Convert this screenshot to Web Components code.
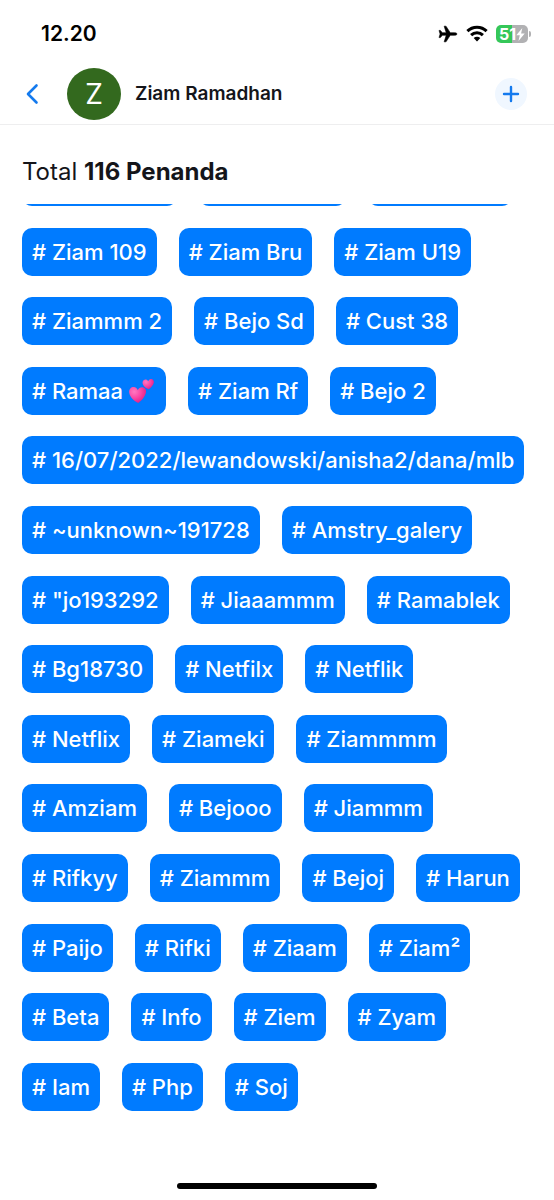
<!DOCTYPE html>
<html lang="id">
<head>
<meta charset="utf-8">
<meta name="viewport" content="width=device-width, initial-scale=1">
<title>Penanda</title>
<style>
  html, body { height: 100%; }
  body { margin: 0; background: #fff; color: #14151a; font-family: Inter, "Noto Sans", sans-serif; }
</style>
</head>
<body>
<tags-page></tags-page>

<template id="t-page">
  <style>
    :host { display: flex; flex-direction: column; height: 100vh; }
    h2 { margin: 0; padding: 31px 22px 16px; font-size: 24px; line-height: 32px; font-weight: 400; }
    b { font-weight: 700; }
    main { flex: 1; min-height: 0; display: flex; flex-direction: column; }
  </style>
  <status-bar></status-bar>
  <contact-header>Ziam Ramadhan</contact-header>
  <main>
    <h2>Total <b>116 Penanda</b></h2>
    <tag-list></tag-list>
  </main>
  <home-indicator></home-indicator>
</template>

<template id="t-status">
  <style>
    :host { display: flex; align-items: center; justify-content: space-between; height: 64px; padding: 4px 23px 0 41px; box-sizing: border-box; color: #000; }
    time { font-size: 21px; line-height: 24px; font-weight: 600; }
    div { display: flex; align-items: center; gap: 8px; }
    svg { display: block; }
    .battery { display: flex; align-items: center; gap: 1px; }
    .level { display: flex; align-items: center; justify-content: center; gap: 0; box-sizing: border-box; width: 32px; height: 18px; border-radius: 5px; color: #fff; background: linear-gradient(90deg, #35c759 50%, #b1b1b3 50%); font-size: 16px; line-height: 18px; font-weight: 700; }
    .cap { width: 2px; height: 6px; border-radius: 0 2px 2px 0; background: #b1b1b3; }
  </style>
  <time>12.20</time>
  <div>
    <svg width="20" height="18" viewBox="0 0 22 20" aria-hidden="true"><path stroke="#000" stroke-width=".6" stroke-linejoin="round" d="M21 10c0-1-1.600-1.500-3-1.500h-4.500L8.800 1.300H6.700L9 8.500H4.700L2.600 6H1l1.200 4L1 14h1.600l2.100-2.500H9l-2.300 7.200h2.100l4.700-7.200H18c1.400 0 3-.5 3-1.500z"/></svg>
    <svg width="22" height="18" viewBox="0 0 22 18" aria-hidden="true"><g fill="none" stroke="#000" stroke-width="3"><path d="M1.400 6.100C6.700.8 15.300.8 20.600 6.100"/><path d="M5.100 10.100c3.300-3.300 8.500-3.300 11.800 0"/></g><path d="M7.700 12.900c1.900-1.700 4.700-1.700 6.600 0L11 16.400z"/></svg>
    <div class="battery">
      <div class="level"><span>51</span><svg width="9" height="13" viewBox="0 0 9 13" aria-hidden="true"><path fill="#fff" d="M6.300 0 .3 7.300h3.500L2.500 13l6.200-7.500H5.100z"/></svg></div>
      <span class="cap"></span>
    </div>
  </div>
</template>

<template id="t-header">
  <style>
    :host { display: flex; align-items: center; height: 60px; padding: 0 27px 0 20px; border-bottom: 1px solid #eeeeef; }
    button { border: 0; margin: 0; padding: 0; background: none; display: grid; place-items: center; }
    .back { width: 24px; height: 32px; }
    .avatar { display: grid; place-items: center; width: 54px; height: 52px; margin-left: 23px; border-radius: 50%; background: #33691e; color: #fff; font-size: 28px; line-height: 32px; }
    h1 { flex: 1; margin: 0 0 0 14px; font-size: 19px; line-height: 24px; font-weight: 600; }
    .add { width: 32px; height: 32px; border-radius: 50%; background: #f0f7ff; }
  </style>
  <button class="back" aria-label="Kembali"><svg width="24" height="24" viewBox="0 0 24 24"><path d="M16.500 3.500 8 12l8.500 8.500" fill="none" stroke="#147aee" stroke-width="2.600" stroke-linecap="round" stroke-linejoin="round"/></svg></button>
  <span class="avatar">Z</span>
  <h1><slot></slot></h1>
  <button class="add" aria-label="Tambah"><svg width="18" height="18" viewBox="0 0 18 18"><path d="M9 2v14M2 9h14" fill="none" stroke="#147aee" stroke-width="2.400" stroke-linecap="round"/></svg></button>
</template>

<template id="t-chip">
  <style>
    :host { display: flex; align-items: center; gap: 5px; box-sizing: border-box; height: 48px; padding: 0 10px; border-radius: 10px; background: #007bff; color: #fff; font-size: 22px; line-height: 28px; font-weight: 500; white-space: nowrap; }
  </style>
  <slot></slot>
</template>

<template id="t-hearts">
  <style>:host { display: block; } svg { display: block; }</style>
  <svg width="28" height="28" viewBox="0 0 28 28" role="img" aria-label="dua hati">
    <defs><radialGradient id="g" cx=".3" cy=".3" r=".8"><stop offset="0" stop-color="#ff79c0"/><stop offset=".5" stop-color="#fb45a5"/><stop offset="1" stop-color="#dc1b82"/></radialGradient></defs>
    <path fill="url(#g)" d="M10.200 26C5.500 23.800 1.600 19.800 1.200 15.600.8 11.800 3.300 9.900 5.700 10c2 .1 3.500 1.400 4.100 3.200 1-1.900 2.700-3.300 4.900-2.900 2.600.5 4 2.900 3.100 6-1.100 3.900-4.100 7.200-7.600 9.700z"/>
    <path fill="url(#g)" d="M20.700 12.300c-3-1.100-5.600-3.200-6.100-5.800-.4-2.300.9-3.800 2.500-4 1.400-.1 2.500.6 3.100 1.700.4-1.300 1.500-2.400 3-2.300 1.800.1 3 1.700 2.600 3.800-.5 2.500-2.800 4.900-5.100 6.600z"/>
  </svg>
</template>

<template id="t-list">
  <style>
    :host { flex: 1; min-height: 0; display: flex; overflow: hidden; padding-bottom: 72px; }
    .tags { flex: 1; display: flex; flex-wrap: wrap; align-content: space-between; column-gap: 22px; margin: -46px 22px 0; }
    .wide { width: 155px; }
    .mid { width: 147px; }
    .narrow { width: 144px; }
  </style>
  <div class="tags" role="list"></div>
</template>

<template id="t-home">
  <style>
    :host { display: flex; justify-content: center; padding-bottom: 11px; }
    span { width: 36%; height: 6px; border-radius: 3px; background: #000; }
  </style>
  <span></span>
</template>

<script>
  function define(name, templateId, setup) {
    customElements.define(name, class extends HTMLElement {
      constructor() {
        super();
        const root = this.attachShadow({ mode: 'open' });
        root.append(document.getElementById(templateId).content.cloneNode(true));
        if (setup) setup(root);
      }
    });
  }

  const TAGS = ['Ziam 109', 'Ziam Bru', 'Ziam U19', 'Ziammm 2', 'Bejo Sd', 'Cust 38',
    'Ramaa', 'Ziam Rf', 'Bejo 2', '16/07/2022/lewandowski/anisha2/dana/mlb',
    '~unknown~191728', 'Amstry_galery', '"jo193292', 'Jiaaammm', 'Ramablek',
    'Bg18730', 'Netfilx', 'Netflik', 'Netflix', 'Ziameki', 'Ziammmm',
    'Amziam', 'Bejooo', 'Jiammm', 'Rifkyy', 'Ziammm', 'Bejoj', 'Harun',
    'Paijo', 'Rifki', 'Ziaam', 'Ziam²', 'Beta', 'Info', 'Ziem', 'Zyam', 'Iam', 'Php', 'Soj'];

  define('tag-chip', 't-chip');
  define('two-hearts', 't-hearts');
  define('tag-list', 't-list', root => {
    const list = root.querySelector('.tags');
    // Row scrolled almost entirely under the heading
    for (const size of ['wide', 'mid', 'narrow']) {
      const chip = document.createElement('tag-chip');
      chip.className = size;
      list.append(chip);
    }
    for (const tag of TAGS) {
      const chip = document.createElement('tag-chip');
      chip.setAttribute('role', 'listitem');
      const label = document.createElement('span');
      label.textContent = '# ' + tag;
      chip.append(label);
      if (tag === 'Ramaa') chip.append(document.createElement('two-hearts'));
      list.append(chip);
    }
  });
  define('status-bar', 't-status');
  define('contact-header', 't-header');
  define('home-indicator', 't-home');
  define('tags-page', 't-page');
</script>
</body>
</html>
